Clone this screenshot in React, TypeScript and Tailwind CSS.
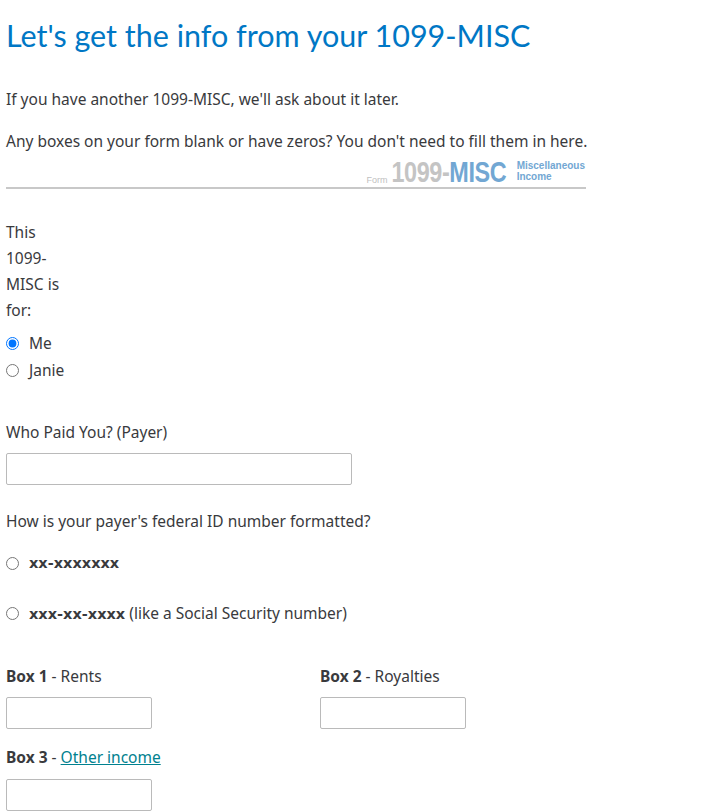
import React from "react";

function Radio({ checked = false, name }: { checked?: boolean; name: string }) {
  return (
    <input
      type="radio"
      name={name}
      defaultChecked={checked}
      className="m-0 h-[13px] w-[13px] shrink-0"
    />
  );
}

function TextBox({ w }: { w: string }) {
  return <input type="text" className={`block h-[32px] ${w} rounded-[2px] border border-[#bababa] bg-white`} />;
}

export default function App() {
  return (
    <div className="min-h-screen bg-white pl-[6px] text-[#393a3d] font-['Noto_Sans',sans-serif] text-[15.5px]">
      <h1 className="pt-[15px] text-[30.5px] leading-[40px] text-[#0077c5] font-normal font-['Lato',sans-serif]">
        Let's get the info from your 1099-MISC
      </h1>
      <p className="mt-[34px] leading-[20px]">If you have another 1099-MISC, we'll ask about it later.</p>
      <p className="mt-[22px] leading-[20px]">Any boxes on your form blank or have zeros? You don't need to fill them in here.</p>
      <div className="mt-[7px] w-[580px] border-b-2 border-[#c8c8c8] flex items-end justify-end pr-[1px] pb-[1px]">
        <span className="text-[9px] text-[#c0c0c0] font-['Liberation_Sans',sans-serif] -mb-[1px]">Form</span>
        <span className="-ml-[28px] text-[30px] leading-[28px] font-bold text-[#c4c4c4] font-['Liberation_Sans',sans-serif] tracking-[-0.5px] scale-x-[0.78] origin-right">
          1099-<span className="text-[#72a7d3]">MISC</span>
        </span>
        <span className="ml-[10px] mb-[4px] flex flex-col text-[10px] leading-[11px] font-bold text-[#72a7d3] font-['Liberation_Sans',sans-serif]">
          <span>Miscellaneous</span>
          <span>Income</span>
        </span>
      </div>

      <fieldset className="mt-[30px]">
        <legend className="w-[62px] leading-[26px]">This 1099-MISC is for:</legend>
        <div className="mt-[10px] flex flex-col gap-[7px]">
          <label className="flex items-center gap-[10px] leading-[20px]">
            <Radio name="who" checked />
            <span>Me</span>
          </label>
          <label className="flex items-center gap-[10px] leading-[20px]">
            <Radio name="who" />
            <span>Janie</span>
          </label>
        </div>
      </fieldset>

      <div className="mt-[42px] leading-[20px]">Who Paid You? (Payer)</div>
      <div className="mt-[11px]">
        <TextBox w="w-[346px]" />
      </div>

      <div className="mt-[26px] leading-[20px]">How is your payer's federal ID number formatted?</div>
      <div className="mt-[22px] flex flex-col gap-[30px]">
        <label className="flex items-center gap-[10px] leading-[20px]">
          <Radio name="fmt" />
          <span className="font-['DejaVu_Sans',sans-serif] font-bold text-[14.5px] tracking-[0px]">xx-xxxxxxx</span>
        </label>
        <label className="flex items-center gap-[10px] leading-[20px]">
          <Radio name="fmt" />
          <span>
            <span className="font-['DejaVu_Sans',sans-serif] font-bold text-[14.5px] tracking-[0px]">xxx-xx-xxxx</span>{" "}
            (like a Social Security number)
          </span>
        </label>
      </div>

      <div className="mt-[42px] grid grid-cols-[314px_200px]">
        <div>
          <div className="leading-[20px]"><b className="font-bold">Box 1</b> - Rents</div>
          <div className="mt-[11px]"><TextBox w="w-[146px]" /></div>
        </div>
        <div>
          <div className="leading-[20px]"><b className="font-bold">Box 2</b> - Royalties</div>
          <div className="mt-[11px]"><TextBox w="w-[146px]" /></div>
        </div>
      </div>
      <div className="mt-[18px] leading-[20px]">
        <b className="font-bold">Box 3</b> - <a href="#" className="text-[#00818f] underline">Other income</a>
      </div>
      <div className="mt-[12px]"><TextBox w="w-[146px]" /></div>
    </div>
  );
}
